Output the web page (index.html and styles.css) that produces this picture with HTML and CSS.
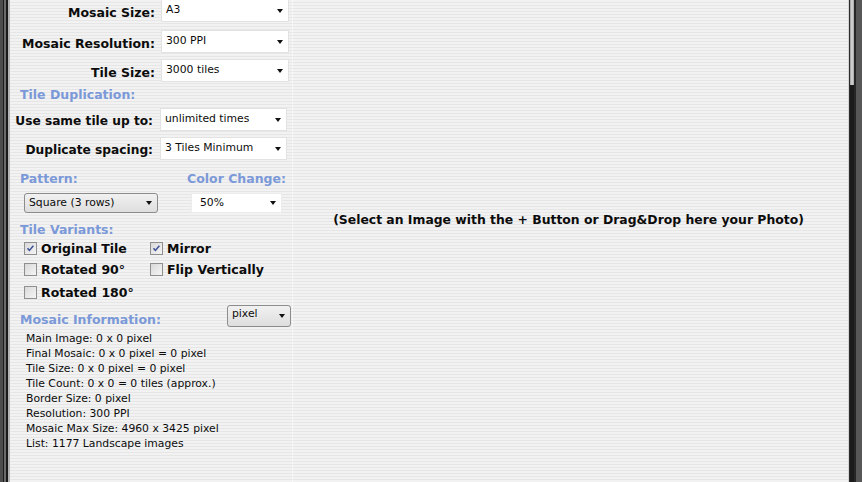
FILE: index.html
```html
<!DOCTYPE html>
<html>
<head>
<meta charset="utf-8">
<link rel="stylesheet" href="styles.css">
</head>
<body>
<div class="window">
  <div class="frame-left"></div>
  <div class="panel">
    <div class="field f1"><span class="lbl">Mosaic Size:</span><div class="sel">A3</div></div>
    <div class="field f2"><span class="lbl">Mosaic Resolution:</span><div class="sel">300 PPI</div></div>
    <div class="field f3"><span class="lbl">Tile Size:</span><div class="sel">3000 tiles</div></div>
    <div class="hdr h1">Tile Duplication:</div>
    <div class="field g f4"><span class="lbl">Use same tile up to:</span><div class="sel">unlimited times</div></div>
    <div class="field g f5"><span class="lbl">Duplicate spacing:</span><div class="sel">3 Tiles Minimum</div></div>
    <div class="hdr-row"><span class="hdr">Pattern:</span><span class="hdr">Color Change:</span></div>
    <div class="sel-row">
      <div class="sel btn pattern">Square (3 rows)</div>
      <div class="sel color">50%</div>
    </div>
    <div class="hdr h3">Tile Variants:</div>
    <div class="checks">
      <label class="cb"><svg width="13" height="13" viewBox="0 0 13 13"><defs><linearGradient id="cg" x1="0" y1="0" x2="1" y2="1"><stop offset="0" stop-color="#d8d8d8"/><stop offset="1" stop-color="#f6f6f6"/></linearGradient></defs><rect x="0.5" y="0.5" width="12" height="12" fill="url(#cg)" stroke="#8f8f8f"/><path d="M3.5 6.2 L5.4 8.4 L9.4 3.8" fill="none" stroke="#3e5298" stroke-width="1.6"/></svg>Original Tile</label>
      <label class="cb"><svg width="13" height="13" viewBox="0 0 13 13"><rect x="0.5" y="0.5" width="12" height="12" fill="url(#cg)" stroke="#8f8f8f"/><path d="M3.5 6.2 L5.4 8.4 L9.4 3.8" fill="none" stroke="#3e5298" stroke-width="1.6"/></svg>Mirror</label>
      <label class="cb"><svg width="13" height="13" viewBox="0 0 13 13"><rect x="0.5" y="0.5" width="12" height="12" fill="url(#cg)" stroke="#8f8f8f"/></svg>Rotated 90°</label>
      <label class="cb"><svg width="13" height="13" viewBox="0 0 13 13"><rect x="0.5" y="0.5" width="12" height="12" fill="url(#cg)" stroke="#8f8f8f"/></svg>Flip Vertically</label>
      <label class="cb last"><svg width="13" height="13" viewBox="0 0 13 13"><rect x="0.5" y="0.5" width="12" height="12" fill="url(#cg)" stroke="#8f8f8f"/></svg>Rotated 180°</label>
    </div>
    <div class="info-head">
      <span class="hdr">Mosaic Information:</span>
      <div class="sel btn unit">pixel</div>
    </div>
    <div class="info">
      <div>Main Image: 0 x 0 pixel</div>
      <div>Final Mosaic: 0 x 0 pixel = 0 pixel</div>
      <div>Tile Size: 0 x 0 pixel = 0 pixel</div>
      <div>Tile Count: 0 x 0 = 0 tiles (approx.)</div>
      <div>Border Size: 0 pixel</div>
      <div>Resolution: 300 PPI</div>
      <div>Mosaic Max Size: 4960 x 3425 pixel</div>
      <div>List: 1177 Landscape images</div>
    </div>
  </div>
  <div class="stage"><p class="hint">(Select an Image with the + Button or Drag&amp;Drop here your Photo)</p></div>
  <div class="frame-right">
    <div class="edge-light"></div>
    <div class="edge-dark"></div>
    <div class="scroll"><div class="thumb"></div></div>
    <div class="edge-dark2"></div>
    <div class="edge-gray"></div>
  </div>
</div>
</body>
</html>
```
FILE: styles.css
```css
html, body {
  margin: 0;
  padding: 0;
}
body {
  width: 862px;
  height: 482px;
  overflow: hidden;
  font-family: "DejaVu Sans", sans-serif;
  color: #0c0c0c;
}
.window {
  display: flex;
  height: 482px;
  background: repeating-linear-gradient(to bottom, #f2f2f2 0 2px, #e6e6e6 2px 3px);
}
.frame-left {
  width: 10px;
  flex: none;
  background: linear-gradient(to right, #4d4d4d 0 3px, #1c1c1c 3px 4px, #6b6b6b 4px 6px, #1a1a1a 6px 8px, #b4b4b4 8px 10px);
}
.panel {
  width: 282px;
  flex: none;
}
.field {
  display: grid;
  grid-template-columns: 145px 128px;
  column-gap: 6px;
  align-items: center;
  height: 23px;
}
.field.g {
  grid-template-columns: 143px 127px;
  column-gap: 7px;
}
.f1 { margin-top: -1px; margin-bottom: 8px; }
.f2 { margin-bottom: 6px; }
.f4 { margin-top: 5px; }
.f5 { margin-top: 6px; }
.lbl {
  text-align: right;
  font-weight: bold;
  font-size: 12.5px;
  white-space: nowrap;
  padding-top: 3px;
}
.g .lbl {
  font-size: 12.2px;
}
.sel {
  position: relative;
  box-sizing: border-box;
  height: 23px;
  background: #fff;
  border: 1px solid #e2e2e2;
  font-size: 10.8px;
  padding-left: 4px;
  display: flex;
  align-items: center;
  padding-bottom: 2px;
  white-space: nowrap;
}
.sel::after {
  content: "";
  position: absolute;
  right: 5px;
  top: 50%;
  margin-top: -2px;
  border-left: 3.5px solid transparent;
  border-right: 3.5px solid transparent;
  border-top: 4px solid #111;
}
.sel.btn {
  background: linear-gradient(#f1f1f1, #dedede);
  border: 1px solid #8c8c8c;
  border-radius: 3px;
}
.hdr {
  display: block;
  font-weight: bold;
  font-size: 12.5px;
  line-height: 16px;
  color: #7b99d8;
  white-space: nowrap;
}
.h1 { margin-top: 5px; padding-left: 10px; }
.hdr-row {
  display: grid;
  grid-template-columns: 167px auto;
  padding-left: 10px;
  margin-top: 11px;
}
.sel-row {
  display: flex;
  margin-top: 6px;
  padding-left: 14px;
}
.sel.pattern {
  width: 134px;
  height: 20px;
}
.sel.color {
  width: 91px;
  height: 20px;
  margin-left: 33px;
  border-color: #ececec;
  padding-left: 8px;
}
.h3 { margin-top: 9px; padding-left: 10px; }
.checks {
  display: grid;
  grid-template-columns: 126px auto;
  padding-left: 14px;
}
.cb {
  display: flex;
  align-items: center;
  gap: 4px;
  height: 21px;
  font-weight: bold;
  font-size: 12.5px;
  white-space: nowrap;
}
.cb svg { flex: none; }
.cb.last { margin-top: 2px; }
.info-head {
  display: flex;
  justify-content: space-between;
  margin-top: 2px;
  padding-left: 10px;
}
.info-head .hdr { padding-top: 7px; }
.sel.unit {
  width: 64px;
  height: 22px;
  margin-right: 1px;
  padding-left: 4px;
  padding-bottom: 5px;
}
.info {
  margin-top: 3px;
  padding-left: 16px;
  font-size: 10.8px;
  line-height: 15px;
}
.stage {
  flex: 1;
  display: flex;
  align-items: center;
  justify-content: center;
  padding-bottom: 44px;
  padding-right: 4px;
  border-left: 1px solid rgba(255, 255, 255, 0.45);
}
.hint {
  margin: 0;
  font-weight: bold;
  font-size: 12.4px;
  white-space: nowrap;
}
.frame-right {
  width: 14px;
  flex: none;
  display: flex;
}
.edge-light { width: 1px; background: #d4d4d4; }
.edge-dark { width: 1px; background: #2b2b2b; }
.scroll { width: 4px; background: #1b1b1b; }
.thumb {
  height: 85px;
  background: linear-gradient(to right, #9c9c9c, #dadada, #a4a4a4);
}
.edge-dark2 { width: 2px; background: #262626; }
.edge-gray { width: 6px; background: #575757; }
```
